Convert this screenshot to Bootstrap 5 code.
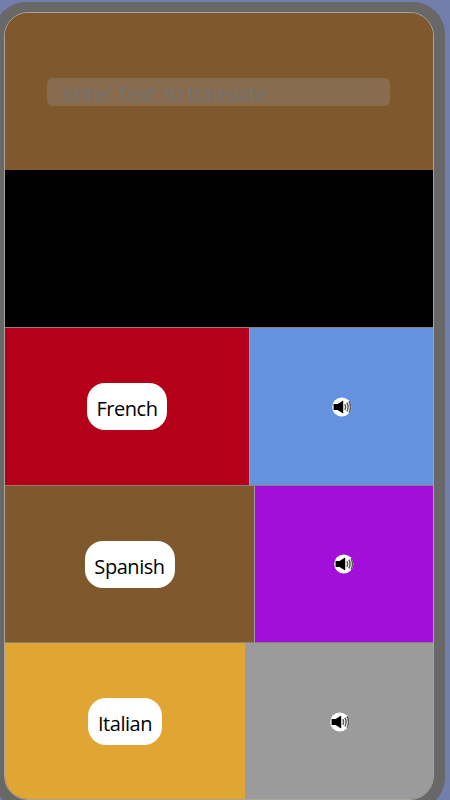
<!DOCTYPE html>
<html lang="en">
<head>
<meta charset="utf-8">
<meta name="viewport" content="width=device-width, initial-scale=1">
<title>Translator</title>
<link href="https://cdn.jsdelivr.net/npm/bootstrap@5.3.0/dist/css/bootstrap.min.css" rel="stylesheet">
<style>
body{background:#727fac;font-family:"Open Sans","Noto Sans",sans-serif;height:800px}
.phone{width:451px;height:808px;margin:2px 0 0 -6px;border:10px solid #686868;border-right-width:11px;border-radius:32px;background:#686868}
.screen{height:788px;border:1px solid #aaa49a;border-radius:24px}
.band{height:157px;flex:none}
.line-top{height:158px;border-top:1px solid #8d8179}
.line-short{height:157px}
.bg-brown{background:#7f582d}
.bg-red{background:#b40018}
.bg-sky{background:#6592df}
.bg-violet{background:#a20fdb}
.bg-gold{background:#e1a534}
.bg-ash{background:#9b9b9b}
.sound-cell{border-left:1px solid #a09a9d}
.w-fr{width:244px}.w-es{width:249px}.w-it{width:240px}
.entry,.entry:focus{width:343px;height:28px;margin-left:42px;margin-bottom:-1px;padding:3px 17px 0;background:#886c4d;border-radius:6px;font-size:20px;line-height:24px;letter-spacing:-.4px;color:#737373;white-space:pre}
.entry::placeholder{color:#737373;opacity:1}
.lang{height:47px;border-radius:18px;font-size:20px;line-height:28px;color:#000;background:#fff;padding:5px 0 0;letter-spacing:-.45px}
.b-fr{width:80px}.b-es{width:90px}.b-it{width:74px}
.sound{width:20px;height:20px}
</style>
<script src="https://cdn.jsdelivr.net/npm/bootstrap@5.3.0/dist/js/bootstrap.bundle.min.js"></script>
</head>
<body class="overflow-hidden m-0">
<svg class="d-none">
<symbol id="speaker" viewBox="0 0 20 20">
<circle cx="9.8" cy="10" r="9.6" fill="#fff"/>
<path d="M1.6 7h3.9L11.2 3.6v12.8L5.5 13H1.6z" fill="#000"/>
<path d="M12.8 7.2q1.6 2.8 0 5.6M14.9 5.6q2.4 4.4 0 8.8M17 4.4q3 5.6 0 11.2" fill="none" stroke="#555" stroke-width="1.4"/>
</symbol>
</svg>
<main class="phone">
<div class="screen d-flex flex-column overflow-hidden">
<div class="band bg-brown d-flex align-items-center"><input class="form-control border-0 shadow-none entry" type="text" placeholder="Enter Text  to translate"></div>
<div class="band bg-black"></div>
<div class="band line-top d-flex">
<div class="w-fr bg-red d-flex align-items-center justify-content-center"><button class="btn border-0 lang b-fr">French</button></div>
<div class="flex-fill bg-sky sound-cell d-flex align-items-center justify-content-center"><svg class="sound"><use href="#speaker"/></svg></div>
</div>
<div class="band line-top line-short d-flex">
<div class="w-es bg-brown d-flex align-items-center justify-content-center"><button class="btn border-0 lang b-es">Spanish</button></div>
<div class="flex-fill bg-violet sound-cell d-flex align-items-center justify-content-center"><svg class="sound"><use href="#speaker"/></svg></div>
</div>
<div class="band line-top d-flex">
<div class="w-it bg-gold d-flex align-items-center justify-content-center"><button class="btn border-0 lang b-it">Italian</button></div>
<div class="flex-fill bg-ash sound-cell d-flex align-items-center justify-content-center"><svg class="sound"><use href="#speaker"/></svg></div>
</div>
</div>
</main>
</body>
</html>
